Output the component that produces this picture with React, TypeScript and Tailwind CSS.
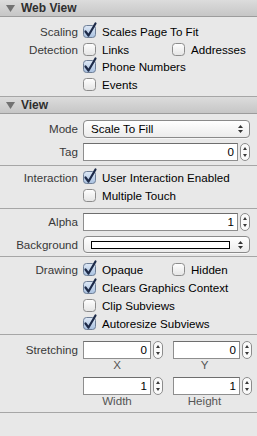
import React from 'react';

const font = { fontFamily: '"Liberation Sans", Arial, sans-serif' };

const Header: React.FC<{ title: string }> = ({ title }) => (
  <div className="flex h-[17px] items-center border-b border-[#9c9c9c] bg-gradient-to-b from-[#dcdcdc] to-[#c6c6c6] pl-[6px]">
    <svg width="9" height="8" viewBox="0 0 9 8" className="mr-[6px]">
      <path d="M0 1 L9 1 L4.5 8 Z" fill="#727272" />
    </svg>
    <span className="text-[12px] font-bold text-[#2e2e2e]">{title}</span>
  </div>
);

const Label: React.FC<{ text?: string }> = ({ text }) => (
  <div className="w-[78px] shrink-0 text-right text-[#383838]">{text}</div>
);

const Checkbox: React.FC<{ checked?: boolean }> = ({ checked }) => (
  <svg width="15" height="14" viewBox="0 0 15 14" className="shrink-0 overflow-visible">
    <defs>
      <linearGradient id="cbOff" x1="0" y1="0" x2="0" y2="1">
        <stop offset="0" stopColor="#ffffff" />
        <stop offset="1" stopColor="#e4e4e4" />
      </linearGradient>
      <linearGradient id="cbOn" x1="0" y1="0" x2="0" y2="1">
        <stop offset="0" stopColor="#dfe9f6" />
        <stop offset="1" stopColor="#a9c1e0" />
      </linearGradient>
    </defs>
    <rect x="0.5" y="0.5" width="12" height="12" rx="3" fill={checked ? 'url(#cbOn)' : 'url(#cbOff)'} stroke={checked ? '#6e7e96' : '#8c8c8c'} />
    {checked && (
      <path d="M2.5 6.5 L5.5 10.5 L12.5 -1.5" fill="none" stroke="#1d2a48" strokeWidth="2.2" strokeLinecap="round" strokeLinejoin="round" />
    )}
  </svg>
);

const Check: React.FC<{ label: string; checked?: boolean; w?: string }> = ({ label, checked, w }) => (
  <div className={`flex items-center gap-[4px] ${w ?? ''}`}>
    <Checkbox checked={checked} />
    <span className="text-black">{label}</span>
  </div>
);

const Stepper: React.FC = () => (
  <svg width="10" height="18" viewBox="0 0 10 18" className="shrink-0">
    <rect x="0.5" y="0.5" width="9" height="17" rx="4.5" fill="#fafafa" stroke="#8c8c8c" />
    <path d="M3 7 L5 4 L7 7 Z" fill="#3a3a3a" />
    <path d="M3 11 L5 14 L7 11 Z" fill="#3a3a3a" />
  </svg>
);

const Field: React.FC<{ value: string; w: string }> = ({ value, w }) => (
  <div className="flex items-center gap-[2px]">
    <div className={`${w} flex h-[18px] items-center justify-end border border-[#8e8e8e] border-t-[#6e6e6e] bg-white pr-[3px] text-black`}>
      {value}
    </div>
    <Stepper />
  </div>
);

const PopupArrows: React.FC = () => (
  <svg width="7" height="10" viewBox="0 0 7 10" className="shrink-0">
    <path d="M1 4 L3.5 1 L6 4 Z" fill="#333" />
    <path d="M1 6 L3.5 9 L6 6 Z" fill="#333" />
  </svg>
);

const Popup: React.FC<{ children: React.ReactNode; h: string }> = ({ children, h }) => (
  <div className={`flex ${h} w-[167px] items-center rounded-[4px] border border-[#8a8a8a] bg-gradient-to-b from-white to-[#ececec] pl-[7px] pr-[5px] shadow-[0_1px_0_rgba(255,255,255,0.6)]`}>
    <div className="flex-1 text-black">{children}</div>
    <PopupArrows />
  </div>
);

const Row: React.FC<{ label?: string; h?: string; children: React.ReactNode }> = ({ label, h = 'h-[18px]', children }) => (
  <div className={`flex ${h} items-center`}>
    <Label text={label} />
    <div className="ml-[5px] flex items-center">{children}</div>
  </div>
);

const App: React.FC = () => {
  return (
    <div className="flex h-[436px] w-[257px] flex-col overflow-hidden bg-[#e8e8e8] text-[11.6px] leading-none" style={font}>
      <Header title="Web View" />

      {/* Web View */}
      <div className="border-b border-[#a6a6a6] pt-[6px] pb-[3px]">
        <Row label="Scaling">
          <Check label="Scales Page To Fit" checked />
        </Row>
        <Row label="Detection" h="h-[17px]">
          <Check label="Links" w="w-[89px]" />
          <Check label="Addresses" />
        </Row>
        <Row>
          <Check label="Phone Numbers" checked />
        </Row>
        <Row h="h-[17px]">
          <Check label="Events" />
        </Row>
      </div>

      <Header title="View" />

      {/* Mode / Tag */}
      <div className="flex flex-col gap-[5px] border-b border-[#a6a6a6] pt-[6px] pb-[4px]">
        <Row label="Mode">
          <Popup h="h-[18px]">Scale To Fill</Popup>
        </Row>
        <Row label="Tag">
          <Field value="0" w="w-[155px]" />
        </Row>
      </div>

      {/* Interaction */}
      <div className="border-b border-[#a6a6a6] pt-[3px] pb-[4px]">
        <Row label="Interaction">
          <Check label="User Interaction Enabled" checked />
        </Row>
        <Row h="h-[17px]">
          <Check label="Multiple Touch" />
        </Row>
      </div>

      {/* Alpha / Background */}
      <div className="flex flex-col gap-[5px] border-b border-[#a6a6a6] pt-[4px] pb-[3px]">
        <Row label="Alpha">
          <Field value="1" w="w-[155px]" />
        </Row>
        <Row label="Background" h="h-[17px]">
          <Popup h="h-[17px]">
            <div className="mr-[7px] h-[8px] border border-black bg-white" />
          </Popup>
        </Row>
      </div>

      {/* Drawing */}
      <div className="border-b border-[#a6a6a6] pt-[4px] pb-[1px]">
        <Row label="Drawing">
          <Check label="Opaque" checked w="w-[89px]" />
          <Check label="Hidden" />
        </Row>
        <Row>
          <Check label="Clears Graphics Context" checked />
        </Row>
        <Row>
          <Check label="Clip Subviews" />
        </Row>
        <Row>
          <Check label="Autoresize Subviews" checked />
        </Row>
      </div>

      {/* Stretching */}
      <div className="border-b border-[#a6a6a6] pt-[6px] pb-[5px]">
        <Row label="Stretching">
          <div className="flex gap-[10px]">
            <Field value="0" w="w-[68px]" />
            <Field value="0" w="w-[67px]" />
          </div>
        </Row>
        <div className="ml-[83px] flex h-[12px] items-center text-[#555]">
          <div className="w-[68px] text-center">X</div>
          <div className="ml-[20px] w-[67px] text-center">Y</div>
        </div>
        <div className="mt-[6px]">
          <Row>
            <div className="flex gap-[10px]">
              <Field value="1" w="w-[68px]" />
              <Field value="1" w="w-[67px]" />
            </div>
          </Row>
        </div>
        <div className="ml-[83px] flex h-[12px] items-center text-[#555]">
          <div className="w-[68px] text-center">Width</div>
          <div className="ml-[20px] w-[67px] text-center">Height</div>
        </div>
      </div>

      <div className="flex-1" />
    </div>
  );
};

export default App;
